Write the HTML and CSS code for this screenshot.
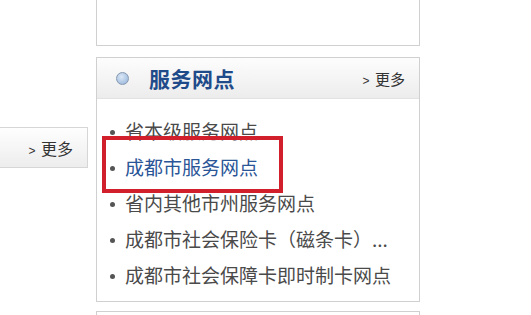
FILE: index.html
```html
<!DOCTYPE html>
<html lang="zh-CN">
<head>
<meta charset="utf-8">
<title>服务网点</title>
<link rel="stylesheet" href="styles.css">
</head>
<body>
<div class="page">
  <aside class="side">
    <div class="side-head"><span class="more"><span class="gt">&gt;</span> 更多</span></div>
  </aside>
  <main class="main">
    <div class="box box-top"></div>
    <section class="box panel">
      <header class="panel-head">
        <span class="dot"></span>
        <h2 class="title">服务网点</h2>
        <span class="more"><span class="gt">&gt;</span> 更多</span>
      </header>
      <ul class="list">
        <li>省本级服务网点</li>
        <li class="active">成都市服务网点</li>
        <li>省内其他市州服务网点</li>
        <li>成都市社会保险卡（磁条卡）...</li>
        <li>成都市社会保障卡即时制卡网点</li>
      </ul>
      <div class="mark"></div>
    </section>
    <div class="box box-bottom"></div>
  </main>
</div>
</body>
</html>
```
FILE: styles.css
```css
html, body {
  margin: 0;
  padding: 0;
  background: #fff;
  font-family: "Noto Sans CJK SC", "Noto Sans", sans-serif;
  overflow: hidden;
}
.page {
  display: flex;
  width: 531px;
  height: 315px;
}
.side {
  width: 88px;
  padding-top: 127px;
  flex: none;
}
.side-head {
  height: 39px;
  border: 1px solid #d6d6d6;
  border-left: none;
  background: linear-gradient(#fefefe, #ededed);
  display: flex;
  align-items: center;
  justify-content: flex-end;
  padding-right: 14px;
}
.side-head .more {
  font-size: 16px;
}
.main {
  margin-left: 8px;
  width: 324px;
  display: flex;
  flex-direction: column;
}
.box {
  border: 1px solid #d0d0d0;
  box-sizing: border-box;
  background: #fff;
}
.box-top {
  height: 46px;
  border-top: none;
}
.panel {
  margin-top: 11px;
  height: 245px;
  position: relative;
}
.panel-head {
  height: 40px;
  border-bottom: 1px solid #e2e2e2;
  background: linear-gradient(#fdfdfd, #ececec);
  display: flex;
  align-items: center;
  padding-left: 19px;
  padding-right: 14px;
}
.dot {
  width: 11px;
  height: 11px;
  border-radius: 50%;
  border: 1px solid #8598b0;
  background: radial-gradient(circle at 40% 35%, #dce8f6, #8fb0d8);
}
.title {
  margin: 0 0 0 20px;
  font-size: 21px;
  font-weight: bold;
  color: #1f4b8a;
  letter-spacing: 0.5px;
}
.more {
  margin-left: auto;
  font-size: 15px;
  color: #333;
}
.gt {
  font-family: "Liberation Sans", sans-serif;
  font-size: 12px;
  margin-right: 2px;
}
.list {
  list-style: none;
  margin: 0;
  padding: 14px 0 0 29px;
}
.list li {
  height: 36px;
  line-height: 36px;
  font-size: 19px;
  color: #4a4a4a;
  white-space: nowrap;
  display: flex;
  align-items: center;
}
.list li::before {
  content: "";
  width: 5px;
  height: 5px;
  border-radius: 50%;
  background: #555;
  margin: 2px 10px 0 -16px;
}
.list li.active {
  color: #2a5597;
}
.mark {
  position: absolute;
  left: 5px;
  top: 78px;
  width: 181px;
  height: 57px;
  box-sizing: border-box;
  border: 4px solid #d11f2c;
}
.box-bottom {
  margin-top: 9px;
  flex: 1;
  border-bottom: none;
}
```
